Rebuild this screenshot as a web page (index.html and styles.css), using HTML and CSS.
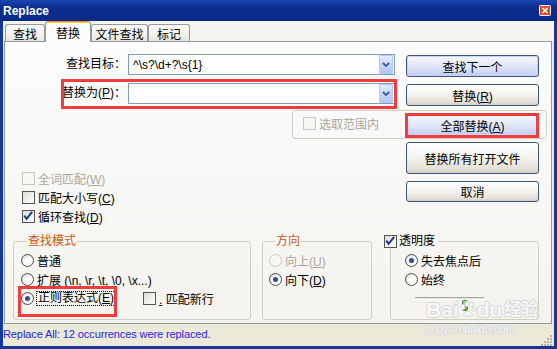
FILE: index.html
```html
<!DOCTYPE html>
<html lang="zh-CN">
<head>
    <meta charset="UTF-8">
    <meta name="viewport" content="width=device-width, initial-scale=1.0">
    <title>Replace</title>
    <link rel="stylesheet" href="styles.css">
</head>
<body>
<div class="window">
    <div class="titlebar">
        <span class="title">Replace</span>
        <span class="close-btn">
            <svg width="12" height="11" viewBox="0 0 12 11">
                <rect x="0.5" y="0.5" width="11" height="10" rx="1" fill="#e2492d" stroke="#fff"/>
                <path d="M3.5 3 L8.5 8 M8.5 3 L3.5 8" stroke="#fff" stroke-width="1.6"/>
            </svg>
        </span>
    </div>

    <div class="frame">
        <div class="tabs">
            <div class="tab tab-find">查找</div>
            <div class="tab tab-replace active">替换</div>
            <div class="tab tab-files">文件查找</div>
            <div class="tab tab-mark">标记</div>
        </div>

        <div class="panel">
            <div class="row">
                <label class="field-label">查找目标：</label>
                <div class="combo">
                    <span class="combo-text">^\s?\d+?\s{1}</span>
                    <span class="combo-arrow"><svg width="8" height="5" viewBox="0 0 8 5"><path d="M0.8 0.8 L4 4 L7.2 0.8" fill="none" stroke="#3d5a9c" stroke-width="1.8"/></svg></span>
                </div>
                <button class="btn btn-default">查找下一个</button>
            </div>

            <div class="row row-second">
                <label class="field-label">替换为(<u>P</u>)：</label>
                <div class="combo">
                    <span class="combo-text"></span>
                    <span class="combo-arrow"><svg width="8" height="5" viewBox="0 0 8 5"><path d="M0.8 0.8 L4 4 L7.2 0.8" fill="none" stroke="#3d5a9c" stroke-width="1.8"/></svg></span>
                </div>
                <button class="btn">替换(<u>R</u>)</button>
            </div>

            <div class="scope-box">
                <label class="check check-scope disabled"><span class="box"></span><span>选取范围内</span></label>
                <button class="btn btn-default">全部替换(<u>A</u>)</button>
            </div>

            <div class="options">
                <div class="checks">
                    <label class="check disabled"><span class="box"></span><span>全词匹配(<u>W</u>)</span></label>
                    <label class="check"><span class="box"></span><span>匹配大小写(<u>C</u>)</span></label>
                    <label class="check"><span class="box"><svg width="13" height="13" viewBox="0 0 13 13"><path d="M2.5 5.5 L5 9 L11 1.5" fill="none" stroke="#1f3a8a" stroke-width="2.2"/></svg></span><span>循环查找(<u>D</u>)</span></label>
                </div>
                <div class="side-buttons">
                    <button class="btn btn-tall">替换所有打开文件</button>
                    <button class="btn btn-cancel">取消</button>
                </div>
            </div>

            <div class="groups">
                <fieldset class="group group-mode">
                    <legend>查找模式</legend>
                    <label class="opt"><span class="radio"></span><span>普通</span></label>
                    <label class="opt"><span class="radio"></span><span>扩展 (\n, \r, \t, \0, \x...)</span></label>
                    <div class="opt-line">
                        <label class="opt opt-regex"><span class="radio on"></span><span class="focus">正则表达式(<u>E</u>)</span></label>
                        <label class="check"><span class="box"></span><span><u>.</u>&nbsp;匹配新行</span></label>
                    </div>
                </fieldset>

                <fieldset class="group group-dir">
                    <legend>方向</legend>
                    <label class="opt disabled"><span class="radio"></span><span>向上(<u>U</u>)</span></label>
                    <label class="opt"><span class="radio on"></span><span>向下(<u>D</u>)</span></label>
                </fieldset>

                <fieldset class="group group-alpha">
                    <legend><span class="box"><svg width="13" height="13" viewBox="0 0 13 13"><path d="M2.5 5.5 L5 9 L11 1.5" fill="none" stroke="#1f3a8a" stroke-width="2.2"/></svg></span><span>透明度</span></legend>
                    <label class="opt"><span class="radio on"></span><span>失去焦点后</span></label>
                    <label class="opt"><span class="radio"></span><span>始终</span></label>
                    <div class="slider">
                        <div class="track"></div>
                        <span class="thumb"></span>
                    </div>
                </fieldset>
            </div>
        </div>

        <div class="statusbar">
            <span class="status-text">Replace All: 12 occurrences were replaced.</span>
            <svg class="grip" width="12" height="12" viewBox="0 0 12 12">
                <g fill="#b8b4a2">
                    <rect x="9" y="1" width="2" height="2"/>
                    <rect x="6" y="4" width="2" height="2"/><rect x="9" y="4" width="2" height="2"/>
                    <rect x="3" y="7" width="2" height="2"/><rect x="6" y="7" width="2" height="2"/><rect x="9" y="7" width="2" height="2"/>
                    <rect x="0" y="10" width="2" height="2"/><rect x="3" y="10" width="2" height="2"/><rect x="6" y="10" width="2" height="2"/><rect x="9" y="10" width="2" height="2"/>
                </g>
            </svg>
        </div>
    </div>

    <!-- 红框标注 -->
    <div class="mark mark-replace"></div>
    <div class="mark mark-all"></div>
    <div class="mark mark-regex"></div>

    <!-- 水印 -->
    <div class="watermark">
        <div class="wm-logo">Bai<svg width="18" height="18" viewBox="0 0 18 18"><g fill="#f7f7f7" stroke="#d6d6d6"><ellipse cx="4" cy="6" rx="2" ry="2.6"/><ellipse cx="8" cy="3" rx="2" ry="2.4"/><ellipse cx="12.5" cy="3.5" rx="2" ry="2.4"/><ellipse cx="15" cy="8" rx="2" ry="2.4"/><path d="M4 14 Q8 6 14 14 Q9 17 4 14 Z"/></g></svg>du<span class="wm-cn">经验</span></div>
        <div class="wm-url">jingyan.baidu.com</div>
    </div>
</div>
</body>
</html>
```

FILE: styles.css
```css
* {
    box-sizing: border-box;
}

body {
    margin: 0;
    font-family: "Liberation Sans", "Noto Sans CJK SC", sans-serif;
    font-size: 12px;
    color: #000;
}

u {
    text-decoration: underline;
}

.window {
    position: relative;
    width: 557px;
    height: 349px;
    display: flex;
    flex-direction: column;
    background: #15399a;
    overflow: hidden;
}

/* 标题栏 */
.titlebar {
    height: 21px;
    flex: none;
    display: flex;
    align-items: center;
    justify-content: space-between;
    padding: 0 6px 0 3px;
    background: linear-gradient(#1c48b0, #0c2d8f 35%, #0a2a88);
    color: #fff;
}

.title {
    font-weight: bold;
    font-size: 12px;
}

.close-btn {
    display: flex;
}

.frame {
    flex: 1;
    margin: 0 3px 3px;
    background: #ece9d8;
    display: flex;
    flex-direction: column;
}

/* 选项卡 */
.tabs {
    height: 20px;
    flex: none;
    display: flex;
    align-items: flex-end;
    padding-left: 2px;
    background: #f4f3ee;
}

.tab {
    height: 17px;
    display: flex;
    align-items: center;
    justify-content: center;
    border: 1px solid #919b9c;
    border-bottom: none;
    border-radius: 3px 3px 0 0;
    background: linear-gradient(#fefefe, #f3f2ee 60%, #e6e4dc);
}

.tab-find { width: 40px; }
.tab-replace { width: 46px; }
.tab-files { width: 57px; }
.tab-mark { width: 42px; }

.tab.active {
    position: relative;
    z-index: 1;
    height: 21px;
    margin-bottom: -1px;
    border-top: 1px solid #e68b2c;
    box-shadow: inset 0 1px 0 #ffc83c;
    background: #fcfcfe;
    padding-top: 1px;
}

.panel {
    height: 283px;
    flex: none;
    margin: 0 2px 0 1px;
    padding: 12px 12px 0 0;
    border: 1px solid #919b9c;
    background: linear-gradient(#fcfcfe, #f4f3ee);
}

.row {
    height: 23px;
    display: flex;
    align-items: flex-start;
}

.row-second {
    margin-top: 6px;
}

.field-label {
    width: 123px;
    padding-right: 2px;
    text-align: right;
    line-height: 21px;
}

.combo {
    width: 267px;
    height: 21px;
    display: flex;
    align-items: center;
    padding: 0 1px 0 4px;
    border: 1px solid #7f9db9;
    background: #fff;
}

.combo-arrow {
    margin-left: auto;
    width: 14px;
    height: 19px;
    display: flex;
    align-items: center;
    justify-content: center;
    border: 1px solid #b3c6f5;
    border-radius: 1px;
    background: linear-gradient(#e4ecfe, #c6d5fb 50%, #b4c7f6);
}

/* 按钮 */
.btn {
    width: 133px;
    height: 22px;
    margin-left: auto;
    margin-top: 1px;
    padding: 0;
    font: inherit;
    color: #000;
    border: 1px solid #3d5580;
    border-radius: 3px;
    background: linear-gradient(#ffffff, #f5f4f0 45%, #e4e1d8 85%, #d4cec2);
}

.btn-default {
    border-color: #3d5580;
    background: linear-gradient(#f6f8fe, #e6ebfb 40%, #cdd7f4 85%, #b8c6ef);
    box-shadow: inset 0 0 0 1px #c9d4f6;
}

.scope-box {
    width: 255px;
    height: 29px;
    margin: 4px -8px 0 287px;
    padding: 3px 7px 2px 10px;
    display: flex;
    align-items: flex-start;
    border: 1px solid #d0d0bf;
    border-radius: 3px;
}

.scope-box .btn {
    margin-top: 0;
}

.check-scope {
    height: 22px;
}

/* 复选框和单选框 */
.check,
.opt {
    height: 19px;
    display: flex;
    align-items: center;
    gap: 3px;
    white-space: nowrap;
}

.box {
    width: 13px;
    height: 13px;
    flex: none;
    display: flex;
    border: 1px solid #555;
    background: linear-gradient(135deg, #dcdcd5, #ffffff);
}

.box svg {
    margin: -1px 0 0 -1px;
}

.disabled {
    color: #aca899;
}

.disabled .box {
    border-color: #c9c7ba;
    background: #f7f7f3;
}

.radio {
    width: 13px;
    height: 13px;
    flex: none;
    border: 1px solid #4c4c4c;
    border-radius: 50%;
    background: radial-gradient(circle at 65% 65%, #ffffff 35%, #d4d3ca);
}

.radio.on::after {
    content: "";
    display: block;
    width: 5px;
    height: 5px;
    margin: 3px;
    border-radius: 50%;
    background: #2b4ea6;
}

.disabled .radio {
    border-color: #cac8bb;
    background: #f7f7f3;
}

.options {
    display: flex;
}

.checks {
    padding: 30px 0 0 17px;
}

.side-buttons {
    margin-left: auto;
    padding-top: 3px;
    display: flex;
    flex-direction: column;
}

.btn-tall {
    height: 32px;
    margin-top: 0;
}

.btn-cancel {
    height: 21px;
    margin-top: 7px;
}

/* 分组框 */
.groups {
    display: flex;
    margin-top: 9px;
    padding-left: 8px;
}

.group {
    margin: 0;
    padding: 4px 0 3px;
    min-width: 0;
    border: 1px solid #d0d0bf;
    border-radius: 3px;
}

.group legend {
    height: 12px;
    line-height: 12px;
    margin-left: 6px;
    padding: 0 1px;
    color: #d05a10;
}

.group-mode {
    width: 238px;
    padding-left: 7px;
}

.group-dir {
    width: 110px;
    margin-left: 11px;
    padding-left: 6px;
}

.group-alpha {
    width: 149px;
    margin-left: 18px;
    padding-left: 14px;
}

.group-alpha legend {
    display: flex;
    align-items: center;
    gap: 2px;
    margin-left: -21px;
    padding: 0 3px 0 0;
    color: #000;
}

.opt-line {
    display: flex;
}

.opt-regex {
    width: 122px;
}

.focus {
    padding: 0 1px;
    line-height: 13px;
    outline: 1px dotted #000;
}

.slider {
    position: relative;
    height: 19px;
    margin-left: 10px;
    width: 69px;
}

.track {
    margin-top: 8px;
    height: 3px;
    border-top: 1px solid #a7a6a0;
    border-bottom: 1px solid #fff;
    background: #e3e2dc;
}

.thumb {
    position: absolute;
    left: 47px;
    top: 3px;
    width: 6px;
    height: 11px;
    border: 1px solid #3e8a2e;
    border-radius: 2px;
    background: linear-gradient(#9ee08a, #4cb33a);
}

/* 状态栏 */
.statusbar {
    flex: 1;
    display: flex;
    align-items: center;
    justify-content: space-between;
    background: #ece9d8;
}

.status-text {
    color: #2424e6;
    font-size: 11px;
    letter-spacing: -0.1px;
    margin-top: -2px;
}

.grip {
    align-self: flex-end;
    margin: 0 1px 0 0;
}

/* 红框 */
.mark {
    position: absolute;
    border: 3px solid #f03c3c;
}

.mark-replace {
    left: 61px;
    top: 79px;
    width: 336px;
    height: 30px;
}

.mark-all {
    left: 405px;
    top: 113px;
    width: 134px;
    height: 25px;
}

.mark-regex {
    left: 18px;
    top: 286px;
    width: 99px;
    height: 31px;
}

/* 水印 */
.watermark {
    position: absolute;
    left: 426px;
    top: 299px;
    color: #f7f7f7;
    text-shadow: 1px 0 #d6d6d6, -1px 0 #d6d6d6, 0 1px #d6d6d6, 0 -1px #d6d6d6;
}

.wm-logo {
    display: flex;
    align-items: center;
    font-size: 21px;
    font-weight: bold;
    line-height: 22px;
}

.wm-cn {
    font-size: 17px;
    margin-left: 2px;
}

.wm-url {
    font-size: 11px;
    line-height: 12px;
    margin-top: 2px;
}
```
